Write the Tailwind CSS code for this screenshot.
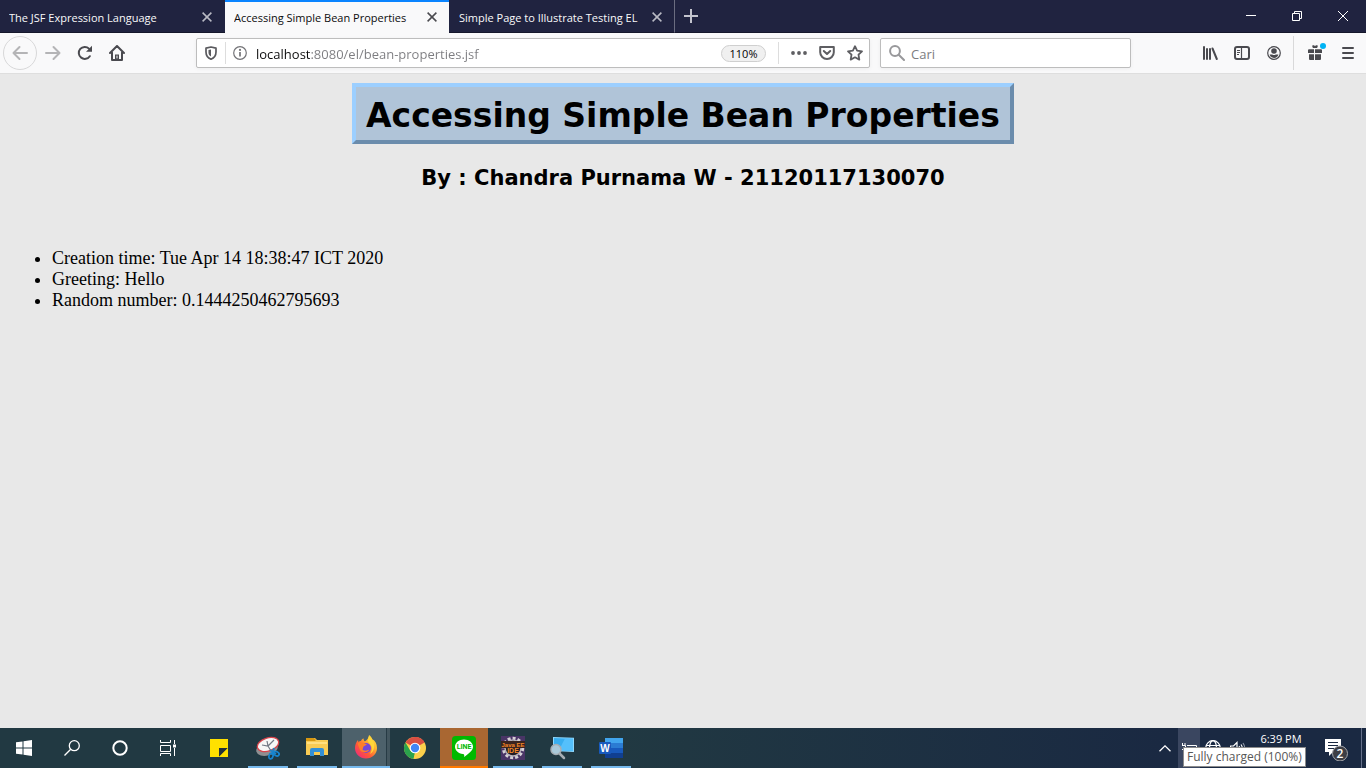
<!DOCTYPE html>
<html lang="en">
<head>
<meta charset="utf-8">
<meta name="viewport" content="width=device-width, initial-scale=1">
<title>Accessing Simple Bean Properties</title>
<script src="https://cdn.jsdelivr.net/npm/@tailwindcss/browser@4"></script>
</head>
<body class="flex h-screen flex-col overflow-hidden bg-[#e8e8e8] font-['Open_Sans',sans-serif] text-black">

<!-- Tab strip -->
<header class="flex h-[33px] shrink-0 bg-[#202340] text-[11px] leading-4 text-[#f9f9fa]">
  <div class="flex w-[225px] items-center border-b border-[#15172b] pr-[10px] pl-[9px] pt-[3px]">
    <button class="flex-1 overflow-hidden text-left whitespace-nowrap">The JSF Expression Language</button>
    <button aria-label="Close tab" class="grid size-4 place-items-center pb-[2px]"><svg width="10" height="10" viewBox="0 0 10 10" stroke="#b9bac4" stroke-width="1.5"><path d="M.6.6l8.8 8.8M9.4.6L.6 9.4"/></svg></button>
  </div>
  <div class="flex w-[224px] items-center border-t-2 border-[#0a84ff] bg-[#f9f9fa] px-[9px] text-[#0c0c0d]">
    <button class="flex-1 overflow-hidden text-left whitespace-nowrap">Accessing Simple Bean Properties</button>
    <button aria-label="Close tab" class="grid size-4 place-items-center pb-[2px]"><svg width="10" height="10" viewBox="0 0 10 10" stroke="#4a4a4f" stroke-width="1.5"><path d="M.6.6l8.8 8.8M9.4.6L.6 9.4"/></svg></button>
  </div>
  <div class="flex w-[226px] items-center border-r border-b border-r-[#6b6d80] border-b-[#15172b] pr-[9px] pl-[10px] pt-[3px]">
    <button class="flex-1 overflow-hidden text-left whitespace-nowrap">Simple Page to Illustrate Testing EL</button>
    <button aria-label="Close tab" class="grid size-4 place-items-center pb-[2px]"><svg width="10" height="10" viewBox="0 0 10 10" stroke="#b9bac4" stroke-width="1.5"><path d="M.6.6l8.8 8.8M9.4.6L.6 9.4"/></svg></button>
  </div>
  <div class="flex flex-1 items-center justify-between border-b border-[#15172b]">
    <button aria-label="New tab" class="grid h-8 w-8 place-items-center"><svg width="14" height="14" viewBox="0 0 14 14" stroke="#c3c4ce" stroke-width="2"><path d="M7 0v14M0 7h14"/></svg></button>
    <div class="flex">
      <button aria-label="Minimize" class="grid h-8 w-[46px] place-items-center"><svg width="10" height="10" stroke="#fff"><path d="M0 4.500h10"/></svg></button>
      <button aria-label="Restore" class="grid h-8 w-[46px] place-items-center"><svg width="10" height="10" fill="none" stroke="#fff"><path d="M.5 2.500h7v7h-7zM2.500 2.500v-2h7v7h-2"/></svg></button>
      <button aria-label="Close" class="grid h-8 w-[46px] place-items-center"><svg width="10" height="10" stroke="#fff"><path d="M0 0l10 10M10 0L0 10"/></svg></button>
    </div>
  </div>
</header>

<!-- Toolbar -->
<nav class="flex h-[41px] shrink-0 items-center border-b border-[#dedede] bg-[#f9f9fa] pl-[3px] text-[#4a4a4f]">
  <button aria-label="Back" class="grid size-[34px] place-items-center rounded-full border border-[#d8d8d9] text-[#b4b4b6]"><svg width="16" height="16" viewBox="0 0 16 16" fill="none" stroke="currentColor" stroke-width="2" stroke-linecap="round" stroke-linejoin="round"><path d="M15 8H1.500M7.500 2L1.500 8l6 6"/></svg></button>
  <button aria-label="Forward" class="grid h-8 w-8 place-items-center text-[#b4b4b6]"><svg width="16" height="16" viewBox="0 0 16 16" fill="none" stroke="currentColor" stroke-width="2" stroke-linecap="round" stroke-linejoin="round"><path d="M1 8h13.500M8.500 2l6 6-6 6"/></svg></button>
  <button aria-label="Reload" class="grid h-8 w-8 place-items-center"><svg width="16" height="16" viewBox="0 0 16 16" fill="none" stroke="currentColor" stroke-width="2" stroke-linecap="round"><path d="M12.800 11.200A6 6 0 1 1 12 3.600"/><path d="M15 .8v6H9z" fill="currentColor" stroke="none"/></svg></button>
  <button aria-label="Home" class="grid h-8 w-8 place-items-center"><svg width="16" height="16" viewBox="0 0 16 16" fill="none" stroke="currentColor" stroke-width="2" stroke-linejoin="round" stroke-linecap="round"><path d="M1 8l7-7 7 7M3 7.500V15h10V7.500"/><path d="M6 15V9.500h4V15z" fill="currentColor" stroke="none"/><path d="M8 11v2" stroke="#f9f9fa" stroke-width="1"/></svg></button>

  <div class="ml-[63px] flex h-[30px] min-w-0 flex-1 items-center rounded-xs border border-[#bdbdbd] bg-white shadow-[0_1px_4px_rgba(0,0,0,0.05)]">
    <button aria-label="Tracking protection" class="grid h-7 w-7 place-items-center"><svg width="14" height="14" viewBox="0 0 14 14" fill="none" stroke="#5a5a5e" stroke-width="1.700"><path d="M7 1L12 2.200V6c0 3.800-2 6-5 7.200C4 12 2 9.800 2 6V2.200z" stroke-linejoin="round"/><path d="M7 3.500L4.500 4v2.500c0 1.900.8 3.200 2.500 4z" fill="#5a5a5e" stroke="none"/></svg></button>
    <span class="h-[22px] w-px bg-[#dddddd]"></span>
    <button aria-label="Site information" class="grid h-7 w-7 place-items-center"><svg width="14" height="14" viewBox="0 0 14 14" fill="none" stroke="#737377"><circle cx="7" cy="7" r="6.300" stroke-width="1.200"/><path d="M7 6v4.500" stroke-width="1.700"/><circle cx="7" cy="3.900" r="1.100" fill="#737377" stroke="none"/></svg></button>
    <input aria-label="Address" value="localhost:8080/el/bean-properties.jsf" class="ml-[2px] h-7 min-w-0 flex-1 bg-[linear-gradient(90deg,#0c0c0d_54px,#7c7c80_54px)] bg-clip-text pt-[2px] text-[13px] text-transparent outline-none">
    <button class="h-[17px] w-[45px] rounded-full border border-[#cfcfcf] bg-[#f0f0f0] text-[11px] leading-[15px] text-black">110%</button>
    <span class="ml-3 h-[22px] w-px bg-[#dddddd]"></span>
    <button aria-label="Page actions" class="ml-[6px] grid h-7 w-7 place-items-center"><svg width="16" height="4" fill="#5e5e62"><circle cx="2" cy="2" r="1.900"/><circle cx="8" cy="2" r="1.900"/><circle cx="14" cy="2" r="1.900"/></svg></button>
    <button aria-label="Save to Pocket" class="grid h-7 w-7 place-items-center"><svg width="16" height="14" viewBox="0 0 16 14" fill="none" stroke="#5e5e62" stroke-width="2" stroke-linejoin="round" stroke-linecap="round"><path d="M1.200 1h13.600v5.200a6.800 6.800 0 0 1-13.600 0z"/><path d="M4.800 5L8 8l3.200-3"/></svg></button>
    <button aria-label="Bookmark this page" class="grid h-7 w-7 place-items-center"><svg width="16" height="16" viewBox="0 0 16 16" fill="none" stroke="#5e5e62" stroke-width="1.800" stroke-linejoin="round"><path d="M8 1.200l2.100 4.400 4.900.7-3.500 3.400.8 4.900L8 12.300l-4.300 2.300.8-4.900L1 6.300l4.900-.7z"/></svg></button>
  </div>

  <label class="ml-[10px] flex h-[30px] w-[251px] items-center rounded-xs border border-[#bdbdbd] bg-white pl-2 shadow-[0_1px_4px_rgba(0,0,0,0.05)]">
    <svg width="16" height="16" viewBox="0 0 16 16" fill="none" stroke="#98989b" stroke-width="2" stroke-linecap="round"><circle cx="6" cy="6" r="4.900"/><path d="M9.700 9.700l5.300 5.300"/></svg>
    <input aria-label="Search" placeholder="Cari" class="ml-[6px] h-7 min-w-0 flex-1 pt-[2px] text-[13px] outline-none placeholder:text-[#7c7c80]">
  </label>

  <div class="ml-[63px] flex items-center">
    <button aria-label="Library" class="grid h-8 w-8 place-items-center"><svg width="16" height="16" viewBox="0 0 16 16" stroke="#4a4a4f" stroke-width="2" stroke-linecap="round"><path d="M2 2v12M5 4v10M8 4v10M10.500 3.500l4.300 10.500"/></svg></button>
    <button aria-label="Sidebars" class="grid h-8 w-8 place-items-center"><svg width="16" height="14" viewBox="0 0 16 14" fill="none" stroke="#4a4a4f"><rect x="1" y="1" width="14" height="12" rx="2" stroke-width="2"/><path d="M7.500 1v12" stroke-width="1.200"/><path d="M3 4.500h3M3 6.500h3M3 8.500h2"/></svg></button>
    <button aria-label="Account" class="grid h-8 w-8 place-items-center"><svg width="14" height="14" viewBox="0 0 14 14"><circle cx="7" cy="7" r="6.300" fill="none" stroke="#4a4a4f" stroke-width="1.200"/><circle cx="7" cy="5" r="2.800" fill="#4a4a4f"/><path d="M2.600 8.500c1 .2 2 .1 2.600 0 1 .8 2.600.8 3.600 0 .6.100 1.600.2 2.600 0A4.800 4.800 0 0 1 7 12a4.800 4.800 0 0 1-4.400-3.500z" fill="#4a4a4f"/></svg></button>
    <span class="ml-[3px] h-[34px] w-px bg-[#d9d9da]"></span>
    <button aria-label="What's new" class="ml-[6px] grid h-8 w-8 place-items-center pb-[2px]"><svg width="20" height="18" viewBox="0 0 20 18" fill="#4a4a4f"><path d="M2 7.200q0-1 1-1h5V10H2zM9 6.200h6q1 0 1 1V10H9zM3 11.200h5V17H4q-1 0-1-1zM9 11.200h6V16q0 1-1 1H9zM6.500 2.300h1.600l.9.900.9-.9h1.600q.7 1.500-.5 2.600H7q-1.200-1-.5-2.600z"/><circle cx="17" cy="3" r="3" fill="#00b3f4"/></svg></button>
    <button aria-label="Menu" class="mr-[2px] grid h-8 w-8 place-items-center"><svg width="12" height="12" viewBox="0 0 12 12" stroke="#4a4a4f" stroke-width="2" stroke-linecap="round"><path d="M1 1h10M1 6h10M1 11h10"/></svg></button>
  </div>
</nav>

<!-- Page -->
<main class="flex min-h-0 flex-1 flex-col pt-[9px]">
  <h1 class="self-center border-4 border-t-[#9ccfff] border-r-[#6b8cac] border-b-[#6b8cac] border-l-[#9ccfff] bg-[#b0c4d8] px-[10px] pt-[7px] pb-[3px] text-center font-['DejaVu_Sans',Verdana,sans-serif] text-[33px] leading-[43px] font-bold">Accessing Simple Bean Properties</h1>
  <h2 class="mt-5 text-center font-['DejaVu_Sans',Verdana,sans-serif] text-[21px] leading-7 font-bold">By : Chandra Purnama W - 21120117130070</h2>
  <ul class="mt-14 list-disc pl-[52px] font-['Liberation_Serif',serif] text-[18px] leading-[21px]">
    <li>Creation time: Tue Apr 14 18:38:47 ICT 2020</li>
    <li>Greeting: Hello</li>
    <li>Random number: 0.1444250462795693</li>
  </ul>
</main>

<!-- Taskbar -->
<footer class="flex h-10 shrink-0 bg-linear-to-r from-[#213942] from-45% to-[#1a2942] to-85% text-white">
  <button aria-label="Start" class="grid w-12 place-items-center"><svg width="16" height="16" fill="#fff"><path d="M0 2.300L6.500 1.400V7.500H0zM7.500 1.200L16 0v7.500H7.500zM0 8.500h6.500v6.100L0 13.700zM7.500 8.500H16V16l-8.500-1.200z"/></svg></button>
  <button aria-label="Search" class="grid w-12 place-items-center"><svg width="16" height="16" fill="none" stroke="#fff" stroke-width="1.300"><circle cx="10.300" cy="5.700" r="5"/><path d="M6.700 9.300L.5 15.500"/></svg></button>
  <button aria-label="Cortana" class="grid w-12 place-items-center"><svg width="16" height="16" fill="none" stroke="#fff" stroke-width="2"><circle cx="8" cy="8" r="6.700"/></svg></button>
  <button aria-label="Task view" class="grid w-12 place-items-center"><svg width="16" height="16" fill="none" stroke="#fff"><path d="M.5 0v2.500h10V0M.5 5.500h10v6H.5zM.5 16v-2.500h10V16M14.500 0v4M14.500 8v8"/><path d="M13 4.500h3v3h-3z" fill="#fff" stroke="none"/></svg></button>
  <div class="ml-[3px] flex gap-px">
    <button aria-label="Sticky Notes" class="grid w-12 place-items-center"><svg width="18" height="18"><path d="M0 0h18v18H0z" fill="#ffe100"/><path d="M9 18V9h9z" fill="#24323a"/><path d="M9 18l9-9v9z" fill="#ffe100"/></svg></button>
    <button aria-label="Snipping Tool" class="flex w-12 flex-col items-center"><span class="grid h-[38px] place-items-center pt-[2px]"><svg width="24" height="24" viewBox="0 0 24 24" fill="none"><ellipse cx="11" cy="13" rx="11" ry="6.500" transform="rotate(-15 11 13)" fill="#8f8f91"/><ellipse cx="12" cy="8.500" rx="11" ry="6.500" transform="rotate(-18 12 8.500)" fill="#f7f7f7" stroke="#d8444b" stroke-width="1.300"/><path d="M6 9l6 1 6-6M12 10l3 5M12 10l-1-5" stroke="#737985" stroke-width="1.200"/><path d="M14 14l6 4M18 12l-2 7" stroke="#2383c4" stroke-width="2"/><ellipse cx="15" cy="20" rx="2" ry="3" transform="rotate(15 15 20)" stroke="#1685cf" stroke-width="1.700"/><ellipse cx="20.500" cy="17.500" rx="3" ry="2" transform="rotate(25 20 17)" stroke="#1685cf" stroke-width="1.700"/></svg></span><span class="h-[2px] w-10 bg-[#76b9ed]"></span></button>
    <button aria-label="File Explorer" class="flex w-12 flex-col items-center"><span class="grid h-[38px] place-items-center"><svg width="22" height="20"><path d="M0 1h9l2 2h11v15H0z" fill="#f8cb54"/><path d="M0 1h8l2 2-1 1H0z" fill="#d79811"/><path d="M1 5h20v2H1z" fill="#ffdf80"/><path d="M4 19v-6q0-2 2-2h10q2 0 2 2v6h-4v-4H8v4z" fill="#3390d5"/></svg></span><span class="h-[2px] w-10 bg-[#76b9ed]"></span></button>
    <button aria-label="Firefox" class="flex w-12 flex-col"><span class="flex h-[38px] w-full"><span class="grid w-11 place-items-center bg-[#4d616b]"><svg class="ml-1" width="24" height="24" viewBox="0 0 24 24"><defs><linearGradient id="fox" x1="1" y1="0" x2=".1" y2="1"><stop stop-color="#fff24a"/><stop offset=".35" stop-color="#ffb52e"/><stop offset=".65" stop-color="#ff5a35"/><stop offset="1" stop-color="#ef2484"/></linearGradient></defs><path d="M15 0c2 1.500 3 3 3.300 4.200C21 5.500 23 8.500 23 13c0 6-5 10.500-11 10.500S1 19 1 13c0-3 1-6 3-8l.5 2.300C5 6.500 6 6 7 6c.5-1.500 1.500-2.200 2.700-2.500C9.500 5 10 6 11 6.300 13 5 15 3 15 0z" fill="url(#fox)"/><circle cx="12" cy="13" r="5" fill="#7548d7"/><path d="M3.500 8.500c2-1.500 3-.5 5-1l4.500 2-3.500 2-1 3c2 2 5 1 6.500 0 0 3-7 4-9 .5z" fill="#ff7e29"/><path d="M15 1c4 4 6 7 5 12-.5 3-2 5-4 6 2-3 3-7 0-10-2-2-3-4-1-8z" fill="#ffd63a"/></svg></span><span class="w-px bg-[#273b45]"></span><span class="flex-1 bg-[#43565f]"></span></span><span class="h-[2px] w-full bg-[#76b9ed]"></span></button>
    <button aria-label="Chrome" class="grid w-12 place-items-center"><svg width="22" height="22" viewBox="0 0 22 22"><circle cx="11" cy="11" r="11" fill="#fcd04b"/><path d="M11 11L1.500 5.500a11 11 0 0 1 19 0z" fill="#d94f43"/><path d="M11 0a11 11 0 0 1 9.500 5.500H11z" fill="#d94f43"/><path d="M1.500 5.500l4.800 8.200L11 16.500 9.500 22A11 11 0 0 1 1.500 5.500z" fill="#2ba24c"/><path d="M9.500 22l6.200-8.300L11 16z" fill="#fcd04b"/><circle cx="11" cy="11" r="5.300" fill="#fff"/><circle cx="11" cy="11" r="4.200" fill="#4285f4"/></svg></button>
    <button aria-label="LINE" class="flex w-12 flex-col items-center bg-[#a96732]"><span class="grid h-[38px] place-items-center pt-[2px]"><svg width="24" height="24" viewBox="0 0 24 24"><rect width="24" height="24" rx="3.500" fill="#00b900"/><path d="M12 3.500c5 0 9 3.200 9 7.200 0 4.100-5 7.300-9 10.300.6-2 .3-2.800-1-3.100-4.700-.5-8-3.500-8-7.200 0-4 4-7.200 9-7.200z" fill="#fff"/><text x="12" y="13" text-anchor="middle" class="font-['Roboto',sans-serif] text-[7px] font-bold" fill="#00b900">LINE</text></svg></span><span class="h-[2px] w-full bg-[#ff7a00]"></span></button>
    <button aria-label="Java EE IDE" class="flex w-12 flex-col items-center"><span class="grid h-[38px] place-items-center pt-[2px]"><svg width="24" height="24" viewBox="0 0 24 24"><path d="M0 0h24v24H0z" fill="#493566"/><circle cx="12" cy="12" r="9.700" fill="none" stroke="#d5d1d5" stroke-width="3" stroke-dasharray="3 2"/><circle cx="12" cy="12" r="8" fill="#211b24" stroke="#b9b4bc" stroke-width="1.500"/><path d="M0 5h24v7H0z" fill="#3a2420"/><g class="font-['Liberation_Sans',sans-serif] font-bold" fill="#f48726" text-anchor="middle"><text x="12" y="11" class="text-[6px]">Java EE</text><text x="12" y="17" class="text-[7px]">IDE</text></g></svg></span><span class="h-[2px] w-10 bg-[#76b9ed]"></span></button>
    <button aria-label="Screen search" class="flex w-12 flex-col items-center"><span class="grid h-[38px] place-items-center pt-[2px]"><svg width="24" height="24" viewBox="0 0 24 24"><path d="M3 1l21 .7V16L3 15z" fill="#8ed9ff"/><path d="M4 2l19 .7V15L4 14z" fill="#38aef0"/><path d="M15 2.500l8 .2V15L9 14z" fill="#55c0fb"/><path d="M9 17l5 5" stroke="#a6adb3" stroke-width="2.500" stroke-linecap="round"/><circle cx="6" cy="13.500" r="5" fill="#aac9d9" stroke="#a6adb3" stroke-width="1.500"/></svg></span><span class="h-[2px] w-10 bg-[#76b9ed]"></span></button>
    <button aria-label="Word" class="flex w-12 flex-col items-center"><span class="grid h-[38px] place-items-center pt-[2px]"><svg width="24" height="22" viewBox="0 0 24 22"><path d="M6 1h18v5H6z" fill="#41a5ee"/><path d="M6 6h18v5H6z" fill="#2b7cd3"/><path d="M6 11h18v5H6z" fill="#185abd"/><path d="M6 16h18v5H6z" fill="#103f91"/><rect y="5" width="12" height="12" rx="1" fill="#185abd"/><text x="6" y="14.500" text-anchor="middle" class="font-['Liberation_Sans',sans-serif] text-[10px] font-bold" fill="#fff">W</text></svg></span><span class="h-[2px] w-10 bg-[#76b9ed]"></span></button>
  </div>

  <div class="ml-auto flex">
    <button aria-label="Show hidden icons" class="grid w-[26px] place-items-center"><svg width="12" height="7" fill="none" stroke="#fff" stroke-width="1.300"><path d="M.5 6.300L6 .9l5.500 5.400"/></svg></button>
    <div class="relative flex">
      <button aria-label="Battery" class="grid w-[22px] place-items-center bg-[#3a4660]"><svg width="16" height="16" viewBox="0 0 16 16" fill="none" stroke="#fff"><path d="M1 5.500h3.500v4H1M1.500 3v2.500M4 3v2.500M3 9.500V12h12.500V5.500H6M7 7.500h6v2H7z"/></svg></button>
      <button aria-label="Network" class="grid w-[26px] place-items-center"><svg width="16" height="16" fill="none" stroke="#fff" stroke-width="1.200"><circle cx="8" cy="8" r="7.300"/><ellipse cx="8" cy="8" rx="3.500" ry="7.300"/><path d="M1 5.500h14M1 10.500h14"/></svg></button>
      <button aria-label="Volume" class="grid w-6 place-items-center"><svg width="16" height="14" fill="none" stroke="#fff" stroke-width="1.200"><path d="M.5 5h3L7 1.500v11L3.500 9h-3zM9 5q1.500 2 0 4M11 3.500q2.500 3.500 0 7"/><path d="M13 2q3.500 5 0 10" stroke="#8992a2"/></svg></button>
      <div role="tooltip" class="absolute top-[19px] left-[5px] z-10 flex h-5 items-center border border-[#8b8b8b] bg-white px-[3px] text-[12px] leading-4 whitespace-nowrap text-[#575757]">Fully charged (100%)</div>
    </div>
    <button class="flex w-[62px] justify-center pt-[2px] text-[11px] leading-[17px]">6:39 PM</button>
    <button aria-label="Notifications" class="grid w-[49px] place-items-center"><svg width="26" height="26" viewBox="0 0 26 26"><path d="M1 4h16v13H9l-4 4v-4H1z" fill="#fff"/><path d="M4 7.500h10M4 10.500h10M4 13.500h7" stroke="#1a2942"/><circle cx="16" cy="18.500" r="7.500" fill="#3c3e45" stroke="#a5a7ac"/><text x="16" y="23" text-anchor="middle" class="font-['Open_Sans',sans-serif] text-[12px] font-semibold" fill="#fff">2</text></svg></button>
    <button aria-label="Show desktop" class="w-[5px] border-l border-[#66708a]"></button>
  </div>
</footer>
</body>
</html>
